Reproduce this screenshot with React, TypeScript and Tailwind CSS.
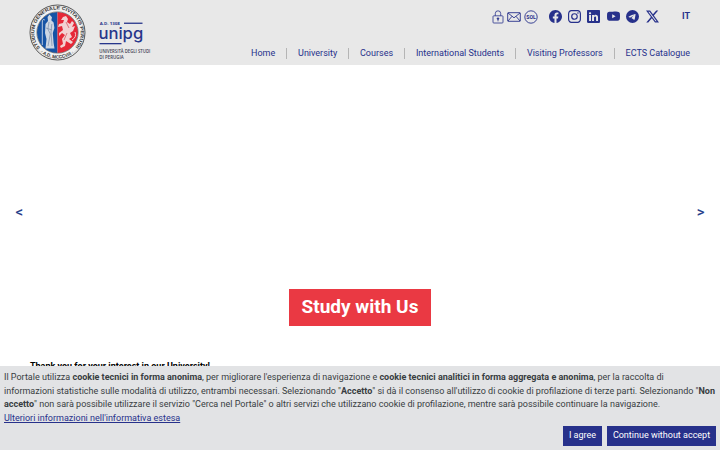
import { BsFacebook, BsInstagram, BsLinkedin, BsTelegram, BsTwitterX, BsYoutube } from 'react-icons/bs';

const navItems = ['Home', 'University', 'Courses', 'International Students', 'Visiting Professors', 'ECTS Catalogue'];

function Seal() {
  return (
    <svg viewBox="0 0 57 57" className="h-[57px] w-[57px] shrink-0">
      <defs>
        <path id="ringTop" d="M11.2 44 A23.2 23.2 0 1 1 45.8 44" />
        <path id="ringBottom" d="M11.5 48.2 A26 26 0 0 0 45.5 48.2" />
      </defs>
      <circle cx="28.5" cy="28.5" r="27.5" fill="#f1f1f1" stroke="#555" strokeWidth="1" />
      <circle cx="28.5" cy="28.5" r="26" fill="none" stroke="#aaa" strokeWidth="0.4" />
      <path d="M28.5 8 A20.5 20.5 0 0 0 28.5 49 Z" fill="#1553a5" />
      <path d="M28.5 8 A20.5 20.5 0 0 1 28.5 49 Z" fill="#e62837" />
      <circle cx="28.5" cy="28.5" r="20.7" fill="none" stroke="#555" strokeWidth="0.6" />
      {/* bishop */}
      <path d="M20.5 10.5 L23 13.2 L22.3 16.2 L24.6 18.5 L25.4 24 L23.8 29 L24.6 39 L25.5 44.5 L16.5 44.5 L17.5 35 L16 29 L16.5 20 L19 17 L18.6 13Z" fill="#cdd6e3" />
      <path d="M20 18 L18.9 25 L21.3 30 L19 42 M22.8 20 L22 28 L23 42 M17 24 L23 26" fill="none" stroke="#788ca9" strokeWidth="0.7" />
      <path d="M13.3 41 V18 Q13.4 14.5 15.8 16" fill="none" stroke="#dfe5ee" strokeWidth="0.8" />
      {/* griffin */}
      <path d="M34 13 L37 12 L39 15 L38 18 L41 20 L43 17 L45 19 L43 23 L46 22 L44 27 L41 29 L43 33 L40 35 L44 38 L42 40 L37 37 L36 42 L32 44 L31 42 L34 40 L33 35 L36 31 L33 29 L30 32 L30 29 L34 26 L33 22 L29 23 L30 20 L34 19 L35 16 L32 16Z" fill="#f2d2d2" />
      <path d="M43 36 Q48 33 46 28" fill="none" stroke="#f4cccc" strokeWidth="1" />
      <path d="M37 18 L40 24 M38 29 L35 36" stroke="#d65c65" strokeWidth="0.8" />
      <text className="fill-[#333] font-['Liberation_Sans'] text-[4.7px] font-bold">
        <textPath href="#ringTop" textLength="105" lengthAdjust="spacingAndGlyphs">STUDIUM GENERALE CIVITATIS PERUSII</textPath>
      </text>
      <text className="fill-[#333] font-['Liberation_Sans'] text-[4.7px] font-bold">
        <textPath href="#ringBottom" textLength="36" lengthAdjust="spacingAndGlyphs">· A.D. MCCCVIII ·</textPath>
      </text>
    </svg>
  );
}

function Wordmark() {
  return (
    <svg viewBox="0 0 54 42" className="h-[42px] w-[54px] shrink-0 fill-[#27368b]">
      <text x="0.8" y="5.6" textLength="20" lengthAdjust="spacingAndGlyphs" className="font-['Open_Sans'] text-[4px] font-bold">A.D. 1308</text>
      <rect x="25" y="3.6" width="18.5" height="1.3" />
      <text x="-0.6" y="19.6" textLength="44.8" lengthAdjust="spacingAndGlyphs" className="font-[Inter] text-[16.5px] font-medium">unipg</text>
      <rect x="0.5" y="24" width="22" height="1.3" />
      <text x="0.3" y="33.6" textLength="51" lengthAdjust="spacingAndGlyphs" className="fill-[#3d4152] font-['Open_Sans'] text-[4.4px] font-semibold">UNIVERSITÀ DEGLI STUDI</text>
      <text x="0.3" y="39.6" textLength="24.5" lengthAdjust="spacingAndGlyphs" className="fill-[#3d4152] font-['Open_Sans'] text-[4.4px] font-semibold">DI PERUGIA</text>
    </svg>
  );
}

function LockIcon() {
  return (
    <svg viewBox="0 0 12 14" className="h-3.5 w-3" fill="none" stroke="currentColor" strokeWidth="0.8">
      <rect x="1" y="5.8" width="10" height="7.2" rx="0.8" />
      <path d="M3.3 5.8 V3.5 a2.7 2.7 0 0 1 5.4 0 V5.8" />
      <circle cx="6" cy="8.6" r="0.8" fill="currentColor" />
      <path d="M6 8.8 V11.3" />
    </svg>
  );
}

function MailIcon() {
  return (
    <svg viewBox="0 0 14 10" className="h-2.5 w-3.5" fill="none" stroke="currentColor" strokeWidth="0.9">
      <rect x="0.7" y="0.7" width="12.6" height="8.6" rx="0.4" />
      <path d="M1 1 L7 5.8 L13 1 M1 9 L5 4.3 M13 9 L9 4.3" />
    </svg>
  );
}

function SolIcon() {
  return (
    <svg viewBox="0 0 14 14" className="h-3.5 w-3.5">
      <circle cx="7" cy="7" r="6.2" fill="none" stroke="currentColor" strokeWidth="0.9" />
      <text x="7" y="8.9" textAnchor="middle" fill="currentColor" className="font-[Roboto] text-[5.2px] font-bold">SOL</text>
    </svg>
  );
}

export default function App() {
  return (
    <div className="relative h-[450px] w-[720px] overflow-hidden bg-white font-[Roboto,sans-serif] text-[#212529]">
      <header className="flex h-[64.5px] bg-[#e8e8e8] pl-[29px] text-[#27318b]">
        <div className="flex gap-[13px] pt-[3.5px]">
          <Seal />
          <div className="pt-[15.5px]">
            <Wordmark />
          </div>
        </div>
        <div className="flex-1">
          <div className="flex h-[33px] items-center justify-end pr-[30px]">
            <div className="flex items-center gap-[2.8px]">
              <LockIcon />
              <MailIcon />
              <SolIcon />
            </div>
            <div className="ml-[11px] flex items-center gap-[6.4px]">
              <BsFacebook size={13} />
              <BsInstagram size={13} />
              <BsLinkedin size={13} />
              <BsYoutube size={13} />
              <BsTelegram size={13} />
              <BsTwitterX size={13} />
            </div>
            <a className="ml-[23.3px] text-[9px] leading-none font-bold">IT</a>
          </div>
          <nav className="mt-[14px] flex justify-end pr-[30px]">
            {navItems.map((item, i) => (
              <div key={item} className="flex items-center">
                {i > 0 && <span className="mr-[11px] ml-[10.8px] h-[11px] w-px bg-[#b5b5b5]" />}
                <a className="text-[9px] leading-[12px] whitespace-nowrap">{item}</a>
              </div>
            ))}
          </nav>
        </div>
      </header>

      <section className="flex h-[301.5px] flex-col">
        <div className="flex h-[224px] shrink-0 items-end justify-between px-[15.5px] pb-[67px] text-[15px] leading-[20px] font-medium text-[#27418b]">
          <span>&lt;</span>
          <span>&gt;</span>
        </div>
        <div className="mx-auto flex h-[37px] w-[142px] shrink-0 items-center justify-center bg-[#ea3943] text-[19px] font-bold whitespace-nowrap text-white">
          Study with Us
        </div>
        <p className="mt-[34px] pl-[30px] text-[9px] leading-[13.5px] font-bold text-black">
          Thank you for your interest in our University!
        </p>
      </section>

      <div className="absolute inset-x-0 bottom-0 h-[84px] bg-[#e2e3e5] px-1 pt-[5px] text-[9px] leading-[13.5px] text-[#383d41]">
        <p className="whitespace-nowrap">
          Il Portale utilizza <b>cookie tecnici in forma anonima</b>, per migliorare l'esperienza di navigazione e <b>cookie tecnici analitici in forma aggregata e anonima</b>, per la raccolta di
          <br />
          informazioni statistiche sulle modalità di utilizzo, entrambi necessari. Selezionando "<b>Accetto</b>" si dà il consenso all'utilizzo di cookie di profilazione di terze parti. Selezionando "<b>Non</b>
          <br />
          <b>accetto</b>" non sarà possibile utilizzare il servizio "Cerca nel Portale" o altri servizi che utilizzano cookie di profilazione, mentre sarà possibile continuare la navigazione.
          <br />
          <a className="text-[#27318b] underline">Ulteriori informazioni nell'informativa estesa</a>
        </p>
        <div className="mt-px flex justify-end gap-[5px] text-white">
          <button className="h-5 w-[39px] bg-[#27318b]">I agree</button>
          <button className="h-5 w-[109px] bg-[#27318b] whitespace-nowrap">Continue without accept</button>
        </div>
      </div>
    </div>
  );
}
